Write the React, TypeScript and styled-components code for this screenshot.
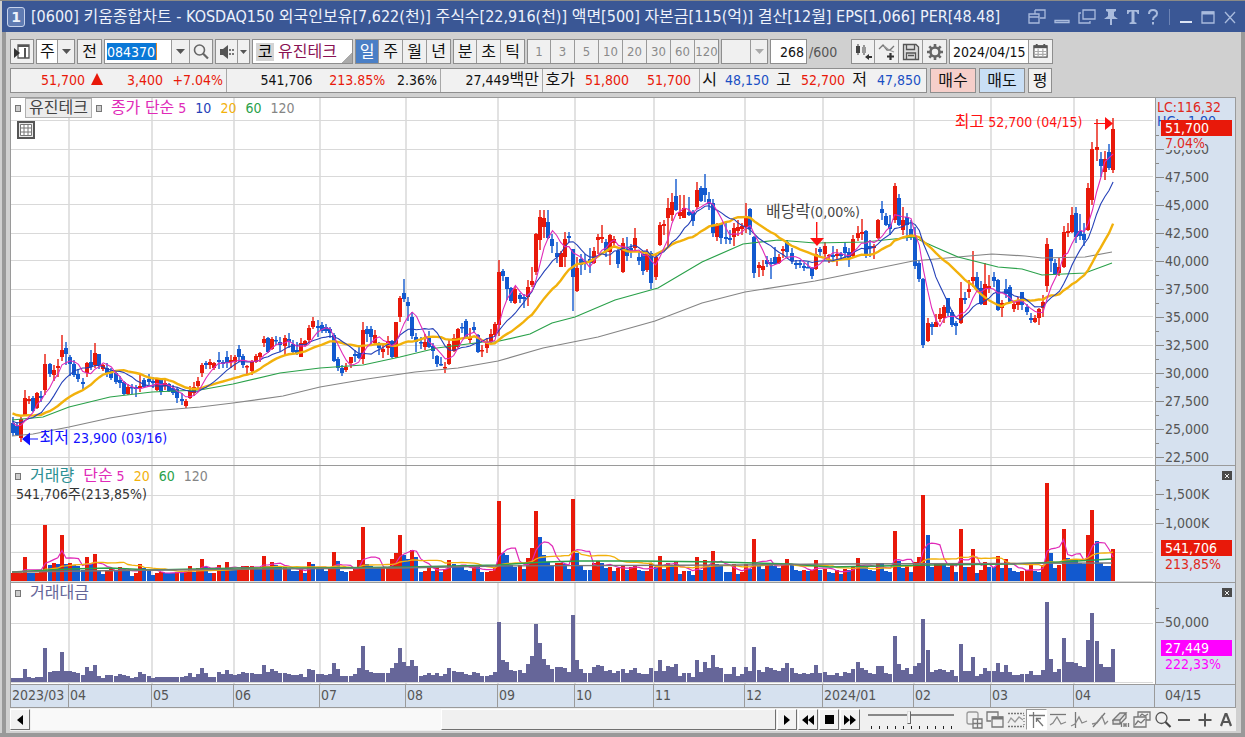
import React from 'react';
import styled, { createGlobalStyle } from 'styled-components';

/* ------------------------------------------------------------------ data */

type Candle = [number, number, number, number, number];

// One row per trading day: direction (1 rise, 0 fall), high, body top, body bottom, low.
const U = 1;
const D = 0;
const candles: Candle[] = [
  // 2023/03
  [D, 417, 423, 433, 436], [D, 422, 426, 435, 436], [U, 417, 419, 438, 442], [U, 390, 398, 415, 416],
  [U, 396, 399, 401, 404], [D, 396, 398, 411, 412], [U, 392, 393, 408, 409], [D, 391, 396, 398, 402],
  [U, 354, 364, 390, 395], [D, 363, 364, 374, 377], [U, 365, 370, 375, 381], [U, 359, 366, 368, 377],
  [U, 335, 350, 357, 361], [D, 342, 348, 354, 365],
  // 04
  [D, 355, 357, 364, 376], [D, 360, 364, 375, 377], [D, 369, 374, 379, 382], [D, 378, 382, 384, 390],
  [U, 362, 363, 373, 377], [D, 350, 362, 367, 370], [U, 343, 353, 365, 368], [D, 354, 354, 366, 369],
  [U, 364, 365, 369, 371], [D, 363, 368, 373, 377], [D, 368, 371, 378, 380], [D, 370, 373, 382, 384],
  [D, 376, 380, 383, 388], [D, 381, 382, 394, 395], [U, 384, 387, 394, 395], [D, 384, 387, 388, 394],
  [D, 385, 387, 389, 397], [U, 373, 386, 388, 392], [D, 378, 380, 387, 388], [D, 374, 379, 382, 385],
  // 05
  [D, 377, 381, 383, 388], [U, 378, 379, 390, 391], [D, 378, 380, 392, 395], [U, 380, 383, 386, 390],
  [D, 383, 384, 391, 392], [D, 385, 388, 393, 395], [D, 388, 389, 398, 403], [D, 393, 399, 401, 405],
  [U, 399, 401, 406, 408], [U, 386, 391, 398, 399], [U, 382, 387, 393, 396], [U, 377, 381, 386, 390],
  [U, 363, 365, 373, 377], [D, 361, 363, 365, 369], [U, 359, 362, 365, 369], [U, 362, 363, 368, 370],
  [D, 352, 360, 362, 369], [D, 360, 362, 364, 368], [D, 351, 357, 363, 368], [U, 355, 360, 362, 368],
  // 06
  [U, 355, 357, 362, 370], [D, 345, 349, 357, 362], [D, 354, 356, 365, 368], [U, 365, 366, 367, 374],
  [U, 360, 362, 371, 375], [U, 354, 356, 362, 363], [U, 352, 353, 357, 362], [U, 336, 339, 343, 347],
  [D, 337, 338, 352, 353], [U, 337, 339, 349, 350], [D, 336, 340, 341, 345], [D, 337, 342, 345, 352],
  [U, 335, 338, 346, 356], [D, 333, 339, 342, 348], [D, 340, 344, 352, 353], [D, 342, 350, 354, 355],
  [U, 338, 343, 357, 357], [U, 340, 341, 345, 346], [U, 325, 328, 340, 343], [U, 317, 321, 327, 329],
  [D, 320, 326, 328, 337],
  // 07
  [D, 322, 325, 331, 333], [D, 324, 327, 331, 333], [D, 327, 329, 333, 338], [D, 333, 335, 361, 362],
  [D, 357, 359, 368, 371], [D, 365, 368, 373, 376], [U, 363, 367, 370, 372], [U, 357, 357, 363, 368],
  [D, 350, 354, 356, 362], [D, 345, 354, 358, 359], [U, 322, 330, 359, 364], [D, 326, 329, 334, 342],
  [D, 326, 329, 337, 346], [U, 330, 335, 343, 344], [D, 342, 344, 348, 355], [U, 343, 349, 352, 358],
  [U, 336, 341, 348, 355], [D, 340, 341, 357, 358], [U, 322, 322, 357, 358], [U, 296, 298, 317, 322],
  [D, 279, 293, 299, 302],
  // 08
  [D, 297, 302, 306, 321], [D, 312, 317, 336, 339], [D, 333, 337, 342, 352], [D, 337, 342, 343, 349],
  [U, 334, 342, 347, 350], [D, 331, 337, 347, 348], [D, 343, 346, 351, 359], [D, 355, 356, 364, 367],
  [D, 357, 364, 365, 366], [U, 362, 367, 368, 373], [U, 340, 344, 364, 365], [U, 334, 338, 351, 352],
  [U, 328, 329, 347, 348], [D, 323, 327, 328, 333], [D, 319, 321, 337, 338], [U, 328, 337, 340, 343],
  [D, 322, 327, 330, 333], [D, 334, 335, 352, 353], [U, 345, 350, 351, 357], [U, 338, 343, 348, 353],
  [U, 329, 334, 342, 343], [U, 322, 324, 335, 337],
  // 09
  [U, 260, 272, 325, 336], [D, 269, 271, 276, 281], [D, 277, 277, 289, 300], [D, 287, 288, 301, 303],
  [U, 287, 289, 303, 304], [D, 293, 295, 299, 303], [D, 294, 297, 299, 308], [U, 280, 287, 297, 306],
  [U, 267, 281, 285, 287], [U, 233, 234, 272, 275], [U, 210, 217, 240, 250], [U, 210, 218, 227, 238],
  [D, 210, 222, 238, 239], [D, 234, 239, 246, 253], [D, 242, 253, 257, 263], [U, 251, 253, 267, 267],
  [U, 232, 239, 257, 267], [D, 232, 236, 238, 242], [D, 249, 249, 277, 311],
  // 10
  [U, 257, 268, 291, 292], [D, 254, 259, 265, 275], [D, 254, 261, 263, 270], [D, 248, 259, 263, 273],
  [U, 247, 251, 263, 264], [U, 234, 237, 240, 254], [U, 225, 237, 239, 243], [D, 239, 242, 252, 257],
  [U, 234, 235, 252, 265], [U, 236, 239, 243, 248], [D, 249, 251, 264, 268], [U, 238, 243, 272, 273],
  [D, 237, 249, 256, 261], [D, 244, 248, 252, 258], [U, 228, 238, 248, 252], [D, 252, 257, 261, 265],
  [D, 253, 254, 271, 275], [U, 249, 252, 270, 272], [D, 251, 253, 283, 289],
  // 11
  [U, 254, 257, 277, 280], [U, 222, 225, 245, 246], [U, 220, 224, 226, 235], [U, 198, 208, 218, 247],
  [U, 193, 202, 215, 221], [D, 179, 196, 210, 211], [U, 195, 212, 216, 219], [U, 195, 208, 218, 218],
  [D, 197, 212, 215, 216], [D, 210, 212, 221, 226], [U, 182, 190, 207, 209], [D, 186, 188, 201, 202],
  [D, 174, 188, 195, 202], [D, 192, 199, 204, 210], [D, 199, 203, 233, 237], [U, 223, 224, 237, 241],
  [D, 223, 224, 238, 244], [D, 223, 237, 239, 244], [D, 230, 238, 240, 244], [U, 223, 228, 237, 246],
  [U, 220, 227, 231, 236], [U, 223, 226, 229, 235],
  // 12
  [U, 203, 217, 227, 233], [D, 208, 209, 229, 235], [D, 236, 237, 273, 278], [U, 262, 265, 268, 277],
  [U, 260, 266, 270, 276], [D, 256, 260, 264, 267], [D, 258, 262, 264, 279], [D, 247, 257, 264, 265],
  [U, 254, 257, 263, 264], [U, 246, 249, 251, 258], [D, 240, 242, 252, 257], [D, 248, 253, 261, 264],
  [D, 260, 263, 265, 269], [D, 260, 263, 265, 268], [D, 263, 266, 268, 271], [D, 262, 267, 268, 268],
  [D, 267, 268, 276, 279], [U, 248, 254, 269, 270], [D, 247, 249, 252, 257],
  // 2024/01
  [U, 242, 246, 254, 257], [U, 254, 255, 256, 263], [D, 246, 255, 257, 261], [U, 249, 254, 256, 266],
  [D, 252, 254, 256, 259], [D, 242, 247, 253, 258], [D, 248, 252, 258, 267], [U, 235, 239, 256, 258],
  [U, 226, 233, 238, 241], [U, 219, 232, 234, 240], [D, 230, 231, 254, 258], [D, 240, 246, 248, 257],
  [U, 244, 246, 248, 259], [U, 219, 220, 238, 239], [D, 201, 209, 213, 220], [D, 213, 216, 225, 226],
  [D, 215, 224, 229, 235], [U, 183, 186, 220, 223], [D, 194, 198, 225, 226], [U, 207, 220, 230, 235],
  [D, 213, 217, 225, 241], [D, 220, 229, 237, 240],
  // 02
  [D, 227, 237, 266, 269], [D, 260, 263, 279, 282], [D, 278, 279, 345, 348], [U, 318, 323, 341, 342],
  [D, 322, 324, 327, 335], [U, 314, 322, 327, 327], [U, 308, 314, 319, 322], [U, 305, 307, 318, 323],
  [D, 298, 298, 313, 316], [D, 310, 312, 325, 327], [D, 321, 323, 326, 335], [U, 282, 298, 323, 324],
  [D, 292, 298, 300, 304], [U, 280, 289, 292, 298], [U, 251, 277, 281, 287], [D, 272, 277, 290, 292],
  [D, 281, 288, 304, 305], [U, 263, 284, 305, 305], [U, 275, 286, 288, 293],
  // 03
  [D, 272, 277, 281, 287], [D, 279, 280, 310, 311], [U, 300, 303, 308, 317], [D, 279, 289, 294, 298],
  [D, 285, 287, 302, 303], [U, 303, 304, 309, 312], [U, 297, 301, 305, 310], [D, 292, 292, 305, 310],
  [D, 304, 307, 312, 315], [D, 313, 318, 320, 323], [U, 315, 318, 322, 323], [U, 308, 309, 318, 325],
  [U, 295, 302, 308, 317], [U, 238, 244, 286, 292], [D, 249, 249, 261, 272], [D, 259, 263, 274, 275],
  [U, 258, 267, 273, 276], [U, 226, 232, 267, 268], [U, 223, 231, 233, 237], [U, 207, 215, 232, 233],
  // 04
  [D, 207, 213, 237, 243], [D, 214, 231, 236, 240], [D, 223, 234, 240, 246], [U, 183, 188, 230, 231],
  [U, 142, 149, 200, 205], [U, 119, 147, 150, 161], [D, 152, 159, 166, 177], [U, 151, 159, 172, 180],
  [D, 144, 152, 168, 170], [U, 118, 129, 170, 173],
];

const volumes = [
  8, 8, 8, 24, 8, 8, 8, 9, 56, 16, 18, 17, 46, 17,
  18, 16, 15, 11, 24, 17, 27, 10, 7, 11, 12, 10, 14, 12, 11, 5, 8, 17, 13, 10,
  6, 8, 9, 8, 8, 8, 9, 9, 10, 15, 9, 13, 22, 14, 8, 8, 16, 12, 19, 12,
  11, 12, 15, 15, 15, 13, 12, 25, 15, 19, 16, 14, 14, 12, 10, 10, 12, 8, 19, 17, 12,
  12, 10, 12, 29, 20, 10, 9, 10, 12, 21, 54, 17, 15, 13, 13, 13, 13, 22, 28, 46, 26,
  22, 31, 24, 9, 10, 13, 10, 14, 9, 12, 21, 17, 15, 15, 11, 10, 15, 14, 9, 9, 10, 14,
  80, 28, 26, 16, 14, 16, 12, 23, 33, 70, 44, 26, 19, 15, 18, 18, 17, 12, 82,
  28, 16, 11, 11, 18, 20, 18, 13, 14, 10, 13, 16, 11, 14, 16, 11, 10, 10, 17,
  14, 25, 12, 18, 16, 19, 7, 10, 10, 6, 24, 11, 21, 15, 30, 17, 16, 9, 9, 17, 7, 9,
  17, 12, 42, 15, 12, 18, 17, 15, 13, 17, 22, 17, 11, 10, 11, 10, 11, 21, 11,
  12, 9, 8, 11, 7, 12, 11, 15, 23, 16, 14, 11, 10, 18, 18, 10, 9, 50, 20, 13, 16, 9,
  19, 24, 86, 46, 14, 17, 18, 17, 14, 17, 9, 52, 14, 14, 32, 8, 11, 19, 14,
  14, 25, 13, 22, 13, 10, 9, 10, 11, 16, 10, 9, 16, 98, 28, 13, 16, 52, 23, 22,
  22, 18, 17, 46, 71, 40, 18, 15, 15, 32,
];

const months: [string, number][] = [
  ['2023/03', 58], ['04', 83], ['05', 82], ['06', 86], ['07', 86], ['08', 92], ['09', 77],
  ['10', 79], ['11', 91], ['12', 78], ['2024/01', 91], ['02', 77], ['03', 83], ['04', 81],
];

const priceLabels = ['50,000', '47,500', '45,000', '42,500', '40,000', '37,500', '35,000', '32,500', '30,000', '27,500', '25,000', '22,500'];

const RED = '#e8190a';
const BLUE = '#1259cf';
const PURPLE = '#666699';

const dayX = (i: number) => 12.5 + i * 4.122;
const closes = candles.map(([up, , top, bottom]) => (up ? top : bottom));
const earlier = [...Array(10).fill(404), ...Array(10).fill(420)] as number[];

function average(values: number[], before: number[], span: number) {
  const all = [...before, ...values];
  return values.map((_, i) => {
    const end = i + before.length + 1;
    return all.slice(end - span, end).reduce((a, b) => a + b, 0) / span;
  });
}
const toPoints = (values: number[]) => values.map((v, i) => `${dayX(i).toFixed(1)},${v.toFixed(1)}`).join(' ');

const ma5 = toPoints(average(closes, earlier, 5));
const ma10 = toPoints(average(closes, earlier, 10));
const ma20 = toPoints(average(closes, earlier, 20));
const ma60 = '12,420 43,417 69,407 110,397 152,392 200,390 233,384 280,373 320,368 363,365 400,357 437,348 483,342 495,342 530,334 552,323 575,317 615,300 658,288 702,262 743,244 778,240 815,243 865,242 913,237 935,247 958,257 998,267 1022,269 1042,275 1085,273 1112,263';
const ma120 = '12,436 33,434 69,427 110,418 152,411 200,407 233,403 283,396 320,387 367,379 415,372 458,368 498,361 543,348 598,337 655,321 702,303 745,292 815,281 825,279 913,261 958,257 992,254 1025,256 1042,258 1085,257 1112,252';

const VOLUME_BASE = 581;
const vEarlier = Array(20).fill(9) as number[];
const volumeMa = (span: number) => toPoints(average(volumes, vEarlier, span).map((v) => VOLUME_BASE - v));

// A volume bar is red when it rose over the day before; equal days follow the candle.
const volumeColor = (i: number) => {
  if (i < 3) return RED;
  const change = volumes[i] - volumes[i - 1];
  if (change === 0) return candles[i][0] ? RED : BLUE;
  return change > 0 ? RED : BLUE;
};

const amounts = volumes.map((v, i) => {
  const [, , top, bottom] = candles[i];
  const price = 47.5 - ((top + bottom) / 2 - 176.7) / 11.2;
  return Math.max(4, Math.round((v * price * 59) / (57.5 * 50)));
});

const monthX = months.slice(0, -1).reduce<number[]>((xs, [, w]) => [...xs, (xs.length ? xs[xs.length - 1] : 11) + w], []);

/* --------------------------------------------------------------- styles */

const Global = createGlobalStyle`
  * { box-sizing: border-box; }
  body { margin: 0; background: #d0d0d0; }
  body, button, input, select {
    font-family: "DejaVu Sans Condensed", "Noto Sans CJK KR", sans-serif;
    font-size: 14px;
  }
  button, input, select { margin: 0; padding: 0; border: 0; border-radius: 0; color: #111; }
  h1, p, ul { margin: 0; padding: 0; font-weight: 400; }
  ul { list-style: none; }
`;

const Ko = styled.span`
  font-size: 16px;
`;

const Window = styled.main`
  min-height: 100vh;
  display: flex;
  flex-direction: column;
  background: #d0d0d0;
  border-top: 1px solid #8a8a86;
  border-bottom: 4px solid #999;
`;

const TitleBar = styled.header`
  height: 31px;
  display: flex;
  align-items: center;
  background: #3a5795;
  color: #eef2fb;
  padding: 0 4px 0 5px;
  margin-left: 2px;
`;

const WindowNumber = styled.span`
  width: 18px;
  height: 20px;
  border: 1px solid #c7d3ec;
  border-radius: 3px;
  background: #5f7bb2;
  font: 700 14px/18px "DejaVu Sans", sans-serif;
  text-align: center;
`;

const TitleText = styled.h1`
  flex: 1;
  margin-left: 6px;
  white-space: pre;
  overflow: hidden;
  font-size: 16px;
  line-height: 24px;
`;

const TitleTools = styled.div`
  display: flex;
  align-items: center;
`;

const TitleButton = styled.button<{ $w?: number }>`
  width: ${(p) => p.$w ?? 24}px;
  height: 24px;
  display: grid;
  place-items: center;
  background: none;
  color: #a9bbdd;
`;

const TitleDivider = styled.span`
  width: 1px;
  height: 16px;
  background: #6d84b5;
  margin: 0 5px 0 6px;
`;

const Body = styled.div`
  flex: 1;
  margin-left: 2px;
  padding: 0 5px 0 4px;
  border-left: 4px solid #999;
  border-right: 4px solid #999;
`;

const Toolbar = styled.div`
  display: flex;
  align-items: center;
  height: 36px;
  padding-top: 3px;
  gap: 2px;
`;

const Group = styled.div`
  display: flex;
  height: 25px;
  border: 1px solid #8e8e8e;
  background: #f0f0f0;

  & > * + * { border-left: 1px solid #9a9a9a; }
`;

const ToolButton = styled.button<{ $w?: number; $on?: boolean; $dim?: boolean }>`
  width: ${(p) => p.$w ?? 24}px;
  height: 23px;
  display: grid;
  place-items: center;
  font-size: ${(p) => (p.$dim ? 13 : 16)}px;
  line-height: 22px;
  background: ${(p) => (p.$on ? '#4a7fc6' : '#f0f0f0')};
  color: ${(p) => (p.$on ? '#fff' : p.$dim ? '#8a8a8a' : '#111')};

  &:first-child { width: ${(p) => p.$w ?? 22}px; }
`;

const Picker = styled.select<{ $w: number }>`
  width: ${(p) => p.$w}px;
  height: 23px;
  appearance: none;
  padding-left: 3px;
  font-size: 16px;
  background: #fff;
`;

const CodeBox = styled.label`
  width: 66px;
  height: 23px;
  padding: 3px 2px;
  background: #fff;
`;

const CodeInput = styled.input`
  display: block;
  width: 50px;
  height: 17px;
  background: #0a78d7;
  color: #fff;
  border-right: 1px solid #e88a2a;
`;

const NameBox = styled.div`
  width: 101px;
  height: 25px;
  display: flex;
  align-items: center;
  gap: 4px;
  padding-left: 3px;
  border: 1px solid #8e8e8e;
  background: linear-gradient(135deg, #fff 0 91%, #aaa 91%);
  font-size: 16px;
  line-height: 18px;
  white-space: nowrap;
`;

const Kind = styled.span`
  width: 18px;
  text-align: center;
  background: #d4d4d4;
`;

const StockName = styled.span`
  color: #8a1253;
`;

const CountInput = styled.input`
  width: 37px;
  height: 25px;
  border: 1px solid #8e8e8e;
  background: #fff;
  text-align: right;
  padding-right: 2px;
`;

const CountMax = styled.span`
  width: 40px;
  color: #555;
`;

const DateInput = styled.input`
  width: 78px;
  height: 23px;
  padding-left: 3px;
  background: #fff;
`;

const QuoteRow = styled.div`
  display: flex;
  gap: 3px;
  height: 25px;
`;

const QuoteStrip = styled.div`
  display: flex;
  width: 917px;
  border: 1px solid #8e8e8e;
  background: #f1f1f1;
  line-height: 22px;
  white-space: nowrap;

  & > * + * { border-left: 1px solid #a8a8a8; }
`;

const QuoteCell = styled.div<{ $w: number }>`
  width: ${(p) => p.$w}px;
  display: flex;
  padding: 0 3px 0 2px;
`;

const Figure = styled.span<{ $w: number; $tone?: 'up' | 'down' }>`
  width: ${(p) => p.$w}px;
  text-align: right;
  color: ${(p) => (p.$tone === 'up' ? '#e8190a' : p.$tone === 'down' ? '#1a4fc4' : '#111')};
`;

const OrderButton = styled.button<{ $bg: string; $w: number }>`
  width: ${(p) => p.$w}px;
  height: 25px;
  border: 1px solid #8e8e8e;
  background: ${(p) => p.$bg};
  font-size: 16px;
  line-height: 22px;
`;

const Chart = styled.section`
  margin-top: 4px;
  border: 1px solid #9a9a9a;
  border-width: 1px 1px 0;
  background: #fff;
`;

const Panel = styled.div<{ $h: number }>`
  height: ${(p) => p.$h}px;
  display: grid;
  grid-template-columns: 1fr 80px;
  border-bottom: 1px solid #9a9a9a;
`;

const Plot = styled.div`
  position: relative;
  overflow: hidden;
`;

const PlotArt = styled.svg`
  position: absolute;
  inset: 0;
  width: 100%;
  height: 100%;
`;

const Legend = styled.div`
  position: relative;
  display: flex;
  align-items: center;
  gap: 9px;
  height: 20px;
  padding-left: 4px;
  white-space: nowrap;
`;

const Square = styled.span`
  width: 6px;
  height: 7px;
  border: 1px solid #777;
  background: #ccc;
`;

const LegendName = styled.span<{ $color: string; $framed?: boolean }>`
  color: ${(p) => p.$color};
  line-height: 17px;
  ${(p) => p.$framed && 'border: 1px solid #b0b0b0; background: #ececec; padding: 0 3px; margin: 0 -5px;'}
`;

const TableButton = styled.button`
  position: relative;
  display: grid;
  place-items: center;
  width: 18px;
  height: 18px;
  margin: 3px 0 0 6px;
  border: 2px solid #555;
  background: #e8e8e8;
`;

const Reading = styled.p`
  position: relative;
  padding-left: 5px;
  line-height: 16px;
  color: #333;
`;

const Note = styled.span<{ $x: number; $y: number; $color: string }>`
  position: absolute;
  left: ${(p) => p.$x}%;
  top: ${(p) => p.$y}px;
  line-height: 18px;
  color: ${(p) => p.$color};
  white-space: nowrap;
`;

const Axis = styled.div<{ $pad: number }>`
  position: relative;
  overflow: hidden;
  border-left: 1px solid #9a9a9a;
  background: #d6e1ef;
  color: #555;
  padding-top: ${(p) => p.$pad}px;
`;

const Tick = styled.li<{ $h: number }>`
  height: ${(p) => p.$h}px;
  line-height: ${(p) => p.$h}px;
  padding-left: 9px;
  background:
    linear-gradient(#888, #888) 0 50% / 8px 1px no-repeat,
    linear-gradient(#888, #888) 0 0 / 3px 1px no-repeat;
`;

const Badge = styled.span<{ $y: number; $bg: string }>`
  position: absolute;
  left: 5px;
  right: 3px;
  top: ${(p) => p.$y}px;
  padding-left: 4px;
  line-height: 16px;
  background: ${(p) => p.$bg};
  color: #fff;
`;

const AxisNote = styled.span<{ $x: number; $y: number; $color: string }>`
  position: absolute;
  left: ${(p) => p.$x}px;
  top: ${(p) => p.$y}px;
  line-height: 14px;
  background: #d6e1ef;
  color: ${(p) => p.$color};
  white-space: nowrap;
`;

const PanelClose = styled.button`
  position: absolute;
  top: 5px;
  right: 3px;
  width: 10px;
  height: 9px;
  display: grid;
  place-items: center;
  background: #4a4a4a;
  color: #eee;
`;

const TimeAxis = styled.div`
  display: grid;
  grid-template-columns: ${months.map(([, w]) => `${w}fr`).join(' ')} 80px;
  height: 23px;
  background: #d6e1ef;
  border-bottom: 1px solid #9a9a9a;
  color: #555;
  line-height: 20px;
  white-space: nowrap;
`;

const Month = styled.span`
  min-width: 0;
  padding-left: 1px;
  border-right: 1px solid #9a9a9a;
`;

const Today = styled.span`
  padding-left: 10px;
`;

const BottomBar = styled.div`
  display: flex;
  align-items: center;
  height: 23px;
  background: #f0f0f0;
  gap: 1px;
`;

const ScrollButton = styled.button`
  width: 20px;
  height: 21px;
  display: grid;
  place-items: center;
  flex: none;
  background: #f2f2f2;
  border: 1px solid;
  border-color: #fff #707070 #707070 #fff;
`;

const ScrollTrack = styled.div`
  flex: 1;
  height: 21px;
  display: flex;
  justify-content: flex-end;
  background: #f9f9f9;
`;

const ScrollThumb = styled.div`
  width: 45%;
  border: 1px solid;
  border-color: #fff #707070 #707070 #fff;
  background: #f0f0f0;
`;

const ZoomSlider = styled.input`
  appearance: none;
  width: 86px;
  height: 18px;
  margin: 0 8px 0 7px;
  background:
    linear-gradient(#888, #888) 0 3px / 100% 2px no-repeat,
    repeating-linear-gradient(90deg, #222 0 1px, transparent 1px 8px) 3px 15px / 82px 3px no-repeat;

  &::-webkit-slider-thumb {
    appearance: none;
    width: 4px;
    height: 13px;
    margin-bottom: 4px;
    border: 1px solid;
    border-color: #ddd #666 #666 #ddd;
    background: #f4f4f4;
  }
`;

const IconStrip = styled.div`
  display: flex;
`;

const IconButton = styled.button<{ $on?: boolean }>`
  width: 21px;
  height: 21px;
  display: grid;
  place-items: center;
  background: ${(p) => (p.$on ? '#fff' : 'transparent')};
  border: 1px solid;
  border-color: ${(p) => (p.$on ? '#999 #fff #fff #999' : 'transparent')};
  color: #777;
`;

/* ---------------------------------------------------------------- icons */

type IconProps = { size?: number; children: React.ReactNode };
const Icon = ({ size = 18, children }: IconProps) => (
  <svg width={size} height={size} viewBox="0 0 18 18" fill="none" stroke="currentColor" strokeWidth="1.3">
    {children}
  </svg>
);

const Arrow = ({ color = '#555' }: { color?: string }) => (
  <svg width="9" height="5" viewBox="0 0 9 5"><path d="M0 0h9L4.5 5z" fill={color} /></svg>
);

const SmallArrow = () => (
  <svg width="7" height="4" viewBox="0 0 9 5"><path d="M0 0h9L4.5 5z" fill="#555" /></svg>
);

const toolIcons: Record<string, React.ReactNode> = {
  layout: <Icon><path d="M5 2h11v13H5z" fill="#fff" stroke="#555" /><path d="M5 3h11M12 5v10" stroke="#555" strokeWidth="2" /><path d="M1 5l6 5-6 5z" fill="#333" stroke="none" /></Icon>,
  search: <Icon><circle cx="7.5" cy="7" r="5" stroke="#666" strokeWidth="1.6" /><path d="M11 10.5l5 5" stroke="#666" strokeWidth="2.2" /></Icon>,
  sound: <Icon><path d="M2 6h3l5-4v14l-5-4H2z" fill="#555" stroke="none" /><path d="M12 6v2m0 2v2m3-6v2m0 2v2" stroke="#777" strokeWidth="2" /></Icon>,
  candles: <Icon><path d="M4 1v11M10 2v10" stroke="#666" /><path d="M2 3h4v7H2z" fill="#444" stroke="none" /><path d="M8 4h4v6H8z" fill="#999" stroke="none" /><path d="M11 14l4-3v2h3v2h-3v2z" stroke="none" fill="#333" /></Icon>,
  lines: <Icon><path d="M1 6l4-4 4 5 3 0 4-4" stroke="#777" /><path d="M6 3l5 4 5 2" stroke="#999" /><path d="M9 13.5h7M12.500 10v7" stroke="#333" strokeWidth="2.2" /></Icon>,
  save: <Icon><path d="M1.5 1.5h12.5l2.500 2.500v12.500h-15z" stroke="#555" fill="#ddd" /><path d="M4.500 1.500v5h8v-5M4.500 16v-6h9v6M6 12.500h6" stroke="#555" /></Icon>,
  gear: <Icon><circle cx="9" cy="9" r="4.500" stroke="#666" strokeWidth="2.600" /><path d="M9 1v3M9 14v3M1 9h3M14 9h3M3.300 3.300l2 2M12.700 12.700l2 2M14.700 3.300l-2 2M5.300 12.700l-2 2" stroke="#666" strokeWidth="2.600" /></Icon>,
  calendar: <Icon size={17}><path d="M2 3h14v12H2z" fill="#fff" stroke="#555" /><path d="M2 4h14" stroke="#555" strokeWidth="3" /><path d="M2 9h14M2 12h14M6.500 6v9M11.500 6v9" stroke="#aaa" /><path d="M5 1v3M13 1v3" stroke="#555" strokeWidth="2" /></Icon>,
};

const bottomIcons: { label: string; on?: boolean; art: React.ReactNode }[] = [
  { label: '차트 추가', art: <Icon><path d="M13 7V3q0-2-2-2H4Q2 1 2 3v8q0 2 2 2h4" stroke="#999" /><path d="M8 8h9v9H8zM12.500 8v9M8 12.500h9" /></Icon> },
  { label: '겹쳐 보기', art: <Icon><path d="M5 10H1V1h11v4" /><path d="M6 6h11v10H6z" /><path d="M6 7h11" strokeWidth="3" /></Icon> },
  { label: '구간', art: <Icon><path d="M1 2.500h16M1 15.500h16" strokeDasharray="2 1" /><path d="M1 12l3-5 4 4 4-5 4 3" stroke="#999" /><path d="M17 4v10" strokeDasharray="1 2" /></Icon> },
  { label: '십자선', on: true, art: <Icon><path d="M1 4.500h16M5.500 1v16M8 7l7 8M8.500 11V7.500H13" /></Icon> },
  { label: '수평선', art: <Icon><path d="M1 3.500h16" /><path d="M1 14l3-2 4-6 4 7 5-2" stroke="#888" /></Icon> },
  { label: '수직선', art: <Icon><path d="M5.500 1v16" /><path d="M1 15l4-2 4-7 3 6 5-2" stroke="#888" /></Icon> },
  { label: '추세선', art: <Icon><path d="M2 16L14 2" /><path d="M1 13l5-1 5-7 3 8 3-3" stroke="#888" /></Icon> },
  { label: '지우개', art: <Icon><path d="M1 9l7-7h6l-6 7zM1 9v4h7V9M8 13l6-6V2" fill="#ddd" /><path d="M9.500 16v-4M12 16v-4m0 2h2M14 16v-4M16.500 16v-4" /></Icon> },
  { label: '차트 복사', art: <Icon><path d="M5 6V1h12v8h-4" /><path d="M1 6h12v10H1z" /><path d="M2 14l3-4 3 2 4-4M7 5l2-2 3 2 3-2" /></Icon> },
  { label: '돋보기', art: <Icon><circle cx="7.500" cy="7" r="5.500" stroke="#555" /><path d="M11.500 11l5 5" stroke="#444" strokeWidth="2.200" /></Icon> },
  { label: '축소', art: <Icon><path d="M3 9h12" stroke="#555" strokeWidth="2" /></Icon> },
  { label: '확대', art: <Icon><path d="M2.500 9h13M9 2.500v13" stroke="#555" strokeWidth="2" /></Icon> },
];

/* ---------------------------------------------------------------- parts */

const Grid = ({ top, bottom, rows }: { top: number; bottom: number; rows: number[] }) => (
  <g stroke="#d9d9d9">
    {rows.map((y) => <path key={y} d={`M11 ${y}H1153`} />)}
    {monthX.map((x) => <path key={x} d={`M${x} ${top}V${bottom}`} strokeWidth="1.5" />)}
  </g>
);

const PricePlot = () => (
  <PlotArt viewBox="11 98 1144 367" preserveAspectRatio="none">
    <Grid top={98} bottom={465} rows={[120.5, 149.5, 176.5, 204.5, 233.5, 260.5, 289.5, 316.5, 345.5, 373.5, 401.5, 429.5, 457.5]} />
    {candles.map(([up, high, top, bottom, low], i) => {
      const x = Math.round(dayX(i));
      return (
        <g key={i} fill={up ? RED : BLUE}>
          <rect x={x - 0.7} y={high} width="1.4" height={low - high} />
          <rect x={x - 2} y={top} width="4" height={Math.max(1.5, bottom - top)} />
        </g>
      );
    })}
    <g fill="none">
      <polyline points={ma120} stroke="#858585" strokeWidth="1.2" />
      <polyline points={ma60} stroke="#2aa14a" strokeWidth="1.2" />
      <polyline points={ma20} stroke="#f2b10c" strokeWidth="2.4" />
      <polyline points={ma10} stroke="#2440b8" strokeWidth="1.1" />
      <polyline points={ma5} stroke="#e02ab8" strokeWidth="1.1" />
    </g>
    <g fill="#f11">
      <path d="M1094 123h11v-6l8 6.5-8 6.5v-6h-11z" />
      <path d="M816 222h1.4v16h6.6l-7 8-7-8h6z" />
    </g>
    <path d="M38 438.5h-8v-6l-8 6.5 8 6.500v-6h8z" fill="#11f" />
  </PlotArt>
);

const VolumePlot = () => (
  <PlotArt viewBox="11 466 1144 116" preserveAspectRatio="none">
    <Grid top={466} bottom={582} rows={[495.5, 524.5, 552.5, 581.5]} />
    {volumes.map((v, i) => (
      <rect key={i} x={Math.round(dayX(i)) - 2} y={VOLUME_BASE - v} width="4" height={v} fill={volumeColor(i)} />
    ))}
    <g fill="none">
      <polyline points={volumeMa(5)} stroke="#e02ab8" strokeWidth="1.2" />
      <polyline points={volumeMa(20)} stroke="#f2b10c" strokeWidth="1.3" />
      <polyline points="12,572 69,569 110,568 152,570 240,568 320,568 407,567 498,565 545,562 580,561 640,561 720,562 790,564 830,567 930,565 1010,564 1060,562 1112,559" stroke="#2aa14a" strokeWidth="1.5" />
      <polyline points="12,572 160,570 400,568 498,566 740,565 830,564 1112,563" stroke="#777" strokeWidth="1.3" />
    </g>
  </PlotArt>
);

const AmountPlot = () => (
  <PlotArt viewBox="11 583 1144 101" preserveAspectRatio="none">
    <Grid top={583} bottom={684} rows={[623.5, 682.5]} />
    {amounts.map((v, i) => (
      <rect key={i} x={Math.round(dayX(i)) - 2} y={682 - v} width="4" height={v} fill={PURPLE} />
    ))}
  </PlotArt>
);

const ClosePanel = () => (
  <PanelClose aria-label="닫기">
    <svg width="6" height="6" viewBox="0 0 6 6"><path d="M1 1l4 4M5 1L1 5" stroke="currentColor" /></svg>
  </PanelClose>
);

const periods = [['일', '주', '월', '년'], ['분', '초', '틱']];

export default function App() {
  return (
    <Window>
      <Global />
      <TitleBar>
        <WindowNumber>1</WindowNumber>
        <TitleText>[0600] 키움종합차트 - KOSDAQ150 외국인보유[7,622(천)] 주식수[22,916(천)] 액면[500] 자본금[115(억)] 결산[12월] EPS[1,066] PER[48.48]</TitleText>
        <TitleTools>
          <TitleButton aria-label="분리"><Icon><path d="M7 2h10v8h-5M7 2v4M1 6h10v9H1zM1 9h10" /></Icon></TitleButton>
          <TitleButton $w={26} aria-label="내리기"><Icon><path d="M2 12.500h14v2H2z" /></Icon></TitleButton>
          <TitleButton aria-label="복제"><Icon><path d="M5 2h12v9H5zM3 5H1v10h11v-2" /></Icon></TitleButton>
          <TitleButton aria-label="고정"><Icon><path d="M4 1h10v2l-2 1v4l4 3H2l4-3V4L4 3z" fill="currentColor" stroke="none" /><path d="M9 11v6" strokeWidth="2" /></Icon></TitleButton>
          <TitleButton $w={20} aria-label="글꼴"><Icon><path d="M3 2h12v4h-1.5q0-2.5-3-2.500V14l2 .7V16h-7v-1.300l2-.7V3.500q-3 0-3 2.500H3z" fill="currentColor" stroke="none" /></Icon></TitleButton>
          <TitleButton $w={20} aria-label="도움말"><Icon><path d="M5 6q0-4 4-4t4 3.500q0 2-2 3t-2 3.500M9 14v2.500" strokeWidth="2" /></Icon></TitleButton>
          <TitleDivider />
          <TitleButton $w={22} aria-label="최소화"><Icon><path d="M3 14h12" strokeWidth="2" stroke="#dde5f5" /></Icon></TitleButton>
          <TitleButton $w={22} aria-label="최대화"><Icon><path d="M3 4h12v11H3z" /><path d="M3 5h12" strokeWidth="3" /></Icon></TitleButton>
          <TitleButton $w={22} aria-label="닫기"><Icon><path d="M4 4l10 11M14 4L4 15" /></Icon></TitleButton>
        </TitleTools>
      </TitleBar>

      <Body>
        <Toolbar>
          <Group><ToolButton $w={22} aria-label="메뉴 열기">{toolIcons.layout}</ToolButton></Group>
          <Group>
            <Picker $w={20} aria-label="종목 구분" defaultValue="주"><option>주</option></Picker>
            <ToolButton $w={17} aria-label="구분 목록"><Arrow /></ToolButton>
          </Group>
          <Group><ToolButton $w={23}>전</ToolButton></Group>
          <Group>
            <CodeBox><CodeInput aria-label="종목코드" defaultValue="084370" /></CodeBox>
            <ToolButton $w={18} aria-label="종목 목록"><Arrow /></ToolButton>
            <ToolButton $w={23} aria-label="검색">{toolIcons.search}</ToolButton>
          </Group>
          <Group>
            <ToolButton $w={21} aria-label="소리">{toolIcons.sound}</ToolButton>
            <ToolButton $w={12} aria-label="소리 설정"><SmallArrow /></ToolButton>
          </Group>
          <NameBox><Kind>코</Kind><StockName>유진테크</StockName></NameBox>
          {periods.map((group, g) => (
            <Group key={g}>
              {group.map((p) => <ToolButton key={p} $on={p === '일'}>{p}</ToolButton>)}
            </Group>
          ))}
          <Group>
            {['1', '3', '5', '10', '20', '30', '60', '120'].map((n) => <ToolButton key={n} $dim>{n}</ToolButton>)}
          </Group>
          <Group>
            <ToolButton $w={28} $dim disabled aria-label="사용자 주기" />
            <ToolButton $w={17} $dim disabled aria-label="주기 목록"><Arrow color="#aaa" /></ToolButton>
          </Group>
          <CountInput aria-label="봉 개수" defaultValue="268" />
          <CountMax>/600</CountMax>
          <Group>
            <ToolButton aria-label="봉 추가">{toolIcons.candles}</ToolButton>
            <ToolButton aria-label="지표 추가">{toolIcons.lines}</ToolButton>
            <ToolButton aria-label="저장">{toolIcons.save}</ToolButton>
            <ToolButton aria-label="설정">{toolIcons.gear}</ToolButton>
          </Group>
          <Group>
            <DateInput aria-label="기준일" defaultValue="2024/04/15" />
            <ToolButton aria-label="달력">{toolIcons.calendar}</ToolButton>
          </Group>
        </Toolbar>

        <QuoteRow>
          <QuoteStrip>
            <QuoteCell $w={215}>
              <Figure $w={72} $tone="up">51,700</Figure>
              <Figure $w={18} $tone="up"><svg width="12" height="12" viewBox="0 0 12 12"><path d="M6 0l6 12H0z" fill={RED} /></svg></Figure>
              <Figure $w={60} $tone="up">3,400</Figure>
              <Figure $w={60} $tone="up">+7.04%</Figure>
            </QuoteCell>
            <QuoteCell $w={214}>
              <Figure $w={84}>541,706</Figure>
              <Figure $w={73} $tone="up">213.85%</Figure>
              <Figure $w={52}>2.36%</Figure>
            </QuoteCell>
            <QuoteCell $w={102}><Figure $w={97}>27,449<Ko>백만</Ko></Figure></QuoteCell>
            <QuoteCell $w={157}>
              <Figure $w={30}><Ko>호가</Ko></Figure>
              <Figure $w={54} $tone="up">51,800</Figure>
              <Figure $w={62} $tone="up">51,700</Figure>
            </QuoteCell>
            <QuoteCell $w={227}>
              <Figure $w={15}><Ko>시</Ko></Figure>
              <Figure $w={52} $tone="down">48,150</Figure>
              <Figure $w={22}><Ko>고</Ko></Figure>
              <Figure $w={54} $tone="up">52,700</Figure>
              <Figure $w={22}><Ko>저</Ko></Figure>
              <Figure $w={54} $tone="down">47,850</Figure>
            </QuoteCell>
          </QuoteStrip>
          <OrderButton $w={46} $bg="#f6cfca">매수</OrderButton>
          <OrderButton $w={46} $bg="#c9dff6">매도</OrderButton>
          <OrderButton $w={24} $bg="#f0f0f0">평</OrderButton>
        </QuoteRow>

        <Chart>
          <Panel $h={368}>
            <Plot>
              <PricePlot />
              <Legend>
                <Square />
                <LegendName $color="#444" $framed><Ko>유진테크</Ko></LegendName>
                <Square />
                <LegendName $color="#e02ab8"><Ko>종가 단순</Ko> 5</LegendName>
                <LegendName $color="#2440b8">10</LegendName>
                <LegendName $color="#f2b10c">20</LegendName>
                <LegendName $color="#2aa14a">60</LegendName>
                <LegendName $color="#858585">120</LegendName>
              </Legend>
              <TableButton aria-label="표 보기">
                <svg width="12" height="12" viewBox="0 0 12 12"><path d="M.5.5h11v11H.5zM.5 4h11M.5 8h11M4 .5v11M8 .5v11" fill="#fff" stroke="#777" /></svg>
              </TableButton>
              <Note $x={82.5} $y={15} $color="#f11"><Ko>최고</Ko> 52,700 (04/15)</Note>
              <Note $x={66} $y={105} $color="#444"><Ko>배당락</Ko>(0,00%)</Note>
              <Note $x={2.5} $y={331} $color="#11f"><Ko>최저</Ko> 23,900 (03/16)</Note>
            </Plot>
            <Axis $pad={37}>
              <ul>{priceLabels.map((t) => <Tick key={t} $h={28}>{t}</Tick>)}</ul>
              <AxisNote $x={1} $y={2} $color="#e0281c">LC:116,32</AxisNote>
              <AxisNote $x={1} $y={16} $color="#1a4fc4">HC: -1,90</AxisNote>
              <AxisNote $x={9} $y={38} $color="#e0281c">7.04%</AxisNote>
              <Badge $y={22} $bg={RED}>51,700</Badge>
            </Axis>
          </Panel>

          <Panel $h={117}>
            <Plot>
              <VolumePlot />
              <Legend>
                <Square />
                <LegendName $color="#2c8f93"><Ko>거래량</Ko></LegendName>
                <LegendName $color="#e02ab8"><Ko>단순</Ko> 5</LegendName>
                <LegendName $color="#f2b10c">20</LegendName>
                <LegendName $color="#2aa14a">60</LegendName>
                <LegendName $color="#858585">120</LegendName>
              </Legend>
              <Reading>541,706주(213,85%)</Reading>
            </Plot>
            <Axis $pad={14}>
              <ul><Tick $h={29}>1,500K</Tick><Tick $h={29}>1,000K</Tick></ul>
              <ClosePanel />
              <Badge $y={74} $bg={RED}>541,706</Badge>
              <AxisNote $x={9} $y={91} $color="#e0281c">213,85%</AxisNote>
            </Axis>
          </Panel>

          <Panel $h={102}>
            <Plot>
              <AmountPlot />
              <Legend>
                <Square />
                <LegendName $color={PURPLE}><Ko>거래대금</Ko></LegendName>
              </Legend>
            </Plot>
            <Axis $pad={25}>
              <ul><Tick $h={28}>50,000</Tick></ul>
              <ClosePanel />
              <Badge $y={57} $bg="#f0f">27,449</Badge>
              <AxisNote $x={9} $y={74} $color="#f0f">222,33%</AxisNote>
            </Axis>
          </Panel>

          <TimeAxis>
            {months.map(([m], i) => <Month key={i}>{m}</Month>)}
            <Today>04/15</Today>
          </TimeAxis>
        </Chart>

        <BottomBar>
          <ScrollButton aria-label="왼쪽으로"><svg width="6" height="10" viewBox="0 0 6 10"><path d="M6 0v10L0 5z" /></svg></ScrollButton>
          <ScrollTrack><ScrollThumb /></ScrollTrack>
          <ScrollButton aria-label="오른쪽으로"><svg width="6" height="10" viewBox="0 0 6 10"><path d="M0 0v10l6-5z" /></svg></ScrollButton>
          <ScrollButton aria-label="뒤로"><svg width="12" height="10" viewBox="0 0 12 10"><path d="M6 0v10L0 5zM12 0v10L6 5z" /></svg></ScrollButton>
          <ScrollButton aria-label="정지"><svg width="9" height="9" viewBox="0 0 9 9"><path d="M0 0h9v9H0z" /></svg></ScrollButton>
          <ScrollButton aria-label="앞으로"><svg width="12" height="10" viewBox="0 0 12 10"><path d="M0 0v10l6-5zM6 0v10l6-5z" /></svg></ScrollButton>
          <ZoomSlider type="range" aria-label="확대 비율" defaultValue={47} />
          <IconStrip>
            {bottomIcons.map(({ label, on, art }) => <IconButton key={label} $on={on} aria-label={label}>{art}</IconButton>)}
            <IconButton aria-label="글자"><Icon><path d="M4 15L8.500 3h1L14 15M6 11h6" stroke="#555" strokeWidth="2.200" /></Icon></IconButton>
          </IconStrip>
        </BottomBar>
      </Body>
    </Window>
  );
}
